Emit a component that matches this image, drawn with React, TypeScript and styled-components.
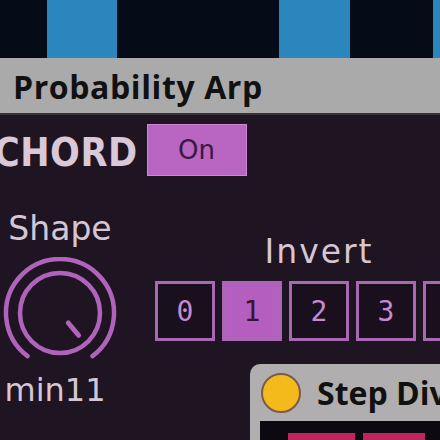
import * as React from 'react';
import styled, { createGlobalStyle } from 'styled-components';

const GlobalStyle = createGlobalStyle`
  html, body {
    margin: 0;
    padding: 0;
    background: #1f1421;
  }
`;

const knobPoint = (cx: number, cy: number, r: number, deg: number) => {
  const a = (deg * Math.PI) / 180;
  return [cx + r * Math.sin(a), cy - r * Math.cos(a)];
};

const Knob: React.FC<{ value: number }> = ({ value }) => {
  const cx = 60;
  const cy = 56;
  const start = -143;
  const end = 143;
  const [sx, sy] = knobPoint(cx, cy, 54, start);
  const [ex, ey] = knobPoint(cx, cy, 54, end);
  const angle = start + (end - start) * value;
  const [px1, py1] = knobPoint(cx, cy, 13, angle);
  const [px2, py2] = knobPoint(cx, cy, 29, angle);
  return (
    <KnobSvg width="120" height="104" viewBox="0 0 120 104">
      <path
        d={`M ${sx} ${sy} A 54 54 0 1 1 ${ex} ${ey}`}
        fill="none"
        stroke="#b063ba"
        strokeWidth="4.5"
        strokeLinecap="round"
      />
      <circle cx={cx} cy={cy} r="40" fill="none" stroke="#b063ba" strokeWidth="4.5" />
      <line x1={px1} y1={py1} x2={px2} y2={py2} stroke="#b063ba" strokeWidth="5" strokeLinecap="round" />
    </KnobSvg>
  );
};

const App: React.FC = () => {
  const inverts = ['0', '1', '2', '3', '4'];
  return (
    <>
      <GlobalStyle />
      <Screen>
        <Strip>
          <StripCell w={47} />
          <StripCell w={70} on />
          <StripCell w={162} />
          <StripCell w={71} on />
          <StripCell w={83} />
          <StripCell w={20} on />
        </Strip>
        <TitleBar>Probability Arp</TitleBar>
        <Panel>
          <ChordRow>
            <ChordLabel>CHORD</ChordLabel>
            <Toggle>On</Toggle>
          </ChordRow>
          <Controls>
            <KnobColumn>
              <Label>Shape</Label>
              <Knob value={0.99} />
              <Value>min11</Value>
            </KnobColumn>
            <InvertColumn>
              <Label spaced>Invert</Label>
              <InvertRow>
                {inverts.map((n) => (
                  <InvertBox key={n} active={n === '1'}>
                    {n}
                  </InvertBox>
                ))}
              </InvertRow>
            </InvertColumn>
          </Controls>
          <DeviceWindow>
            <DeviceHeader>
              <PowerDot />
              <DeviceTitle>Step Div</DeviceTitle>
            </DeviceHeader>
            <DeviceBody>
              <StepCell w={67} />
              <StepCell w={62} />
            </DeviceBody>
          </DeviceWindow>
        </Panel>
      </Screen>
    </>
  );
};

const Screen = styled.div`
  width: 440px;
  height: 440px;
  overflow: hidden;
  display: flex;
  flex-direction: column;
  background: #1f1421;
`;

const Strip = styled.div`
  height: 58px;
  display: flex;
  flex-shrink: 0;
  background: #050c17;
`;

const StripCell = styled.div<{ w: number; on?: boolean }>`
  width: ${(p) => p.w}px;
  flex-shrink: 0;
  background: ${(p) => (p.on ? '#2a86bd' : '#050c17')};
`;

const TitleBar = styled.div`
  height: 57px;
  flex-shrink: 0;
  box-sizing: border-box;
  padding-left: 13px;
  padding-top: 2px;
  display: flex;
  align-items: center;
  background: #abaaaa;
  border-bottom: 2px solid #3a3238;
  font-family: 'Open Sans', sans-serif;
  font-weight: 700;
  font-size: 32px;
  color: #111;
  letter-spacing: 0.6px;
`;

const Panel = styled.div`
  position: relative;
  flex: 1;
  background: #1f1421;
`;

const ChordRow = styled.div`
  display: flex;
  align-items: center;
  gap: 9px;
  margin-top: 9px;
  margin-left: -6px;
  height: 52px;
`;

const ChordLabel = styled.div`
  font-family: 'DejaVu Sans Condensed', 'DejaVu Sans', sans-serif;
  font-stretch: condensed;
  font-weight: 700;
  font-size: 39px;
  letter-spacing: 0.5px;
  color: #d9c8d7;
  padding-top: 4px;
`;

const Toggle = styled.div`
  width: 100px;
  height: 52px;
  box-sizing: border-box;
  display: flex;
  align-items: center;
  justify-content: center;
  background: #b866c2;
  border: 1px solid #cf86d6;
  font-family: 'DejaVu Sans', sans-serif;
  font-size: 26px;
  color: #3a1940;
`;

const Controls = styled.div`
  display: flex;
  margin-top: 33px;
`;

const KnobColumn = styled.div`
  width: 125px;
  display: flex;
  flex-direction: column;
  align-items: center;
`;

const Label = styled.div<{ spaced?: boolean }>`
  font-family: 'DejaVu Sans', sans-serif;
  font-size: 33px;
  line-height: 40px;
  letter-spacing: ${(p) => (p.spaced ? '2px' : '0')};
  color: #d6c6d4;
`;

const KnobSvg = styled.svg`
  display: block;
  margin-top: 8px;
`;

const Value = styled.div`
  font-family: 'DejaVu Sans', sans-serif;
  font-size: 32px;
  line-height: 40px;
  color: #d6c6d4;
  margin-top: 9px;
  margin-right: 10px;
`;

const InvertColumn = styled.div`
  margin-left: 30px;
  margin-top: 23px;
  padding-left: 5px;
  display: flex;
  flex-direction: column;
  align-items: center;
  width: 328px;
  flex-shrink: 0;
`;

const InvertRow = styled.div`
  display: flex;
  gap: 7px;
  margin-top: 9px;
`;

const InvertBox = styled.div<{ active?: boolean }>`
  width: 60px;
  height: 60px;
  box-sizing: border-box;
  display: flex;
  align-items: center;
  justify-content: center;
  border: 3px solid #a968b2;
  background: ${(p) => (p.active ? '#b45ec0' : '#1a0f1c')};
  color: ${(p) => (p.active ? '#3a1530' : '#c58bcd')};
  font-family: 'DejaVu Sans Mono', monospace;
  font-size: 28px;
`;

const DeviceWindow = styled.div`
  position: absolute;
  left: 250px;
  top: 249px;
  width: 220px;
  height: 100px;
  background: #b0aeae;
  border-top-left-radius: 10px;
`;

const DeviceHeader = styled.div`
  height: 57px;
  display: flex;
  align-items: center;
  padding-left: 11px;
  gap: 16px;
`;

const PowerDot = styled.div`
  width: 40px;
  height: 40px;
  border-radius: 50%;
  box-sizing: border-box;
  background: #f4b91b;
  border: 2px solid #7c5a4c;
`;

const DeviceTitle = styled.div`
  font-family: 'Open Sans', sans-serif;
  font-weight: 700;
  font-size: 32px;
  color: #111;
`;

const DeviceBody = styled.div`
  margin-left: 10px;
  height: 60px;
  background: #0c0a10;
  display: flex;
  gap: 8px;
  padding: 12px 0 0 28px;
`;

const StepCell = styled.div<{ w: number }>`
  width: ${(p) => p.w}px;
  height: 30px;
  background: #c0245c;
`;

export default App;
